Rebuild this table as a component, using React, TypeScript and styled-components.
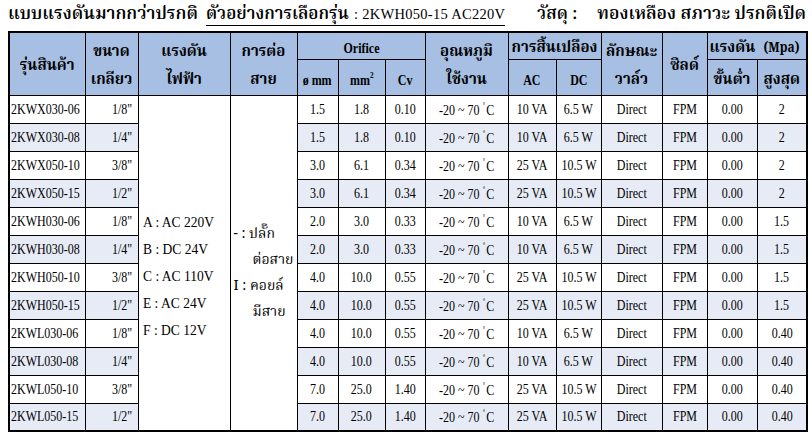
import React from "react";
import styled, { createGlobalStyle } from "styled-components";

const GlobalStyle = createGlobalStyle`
  html, body { margin: 0; padding: 0; background: #ffffff; }
  body { font-family: "Liberation Serif", serif; color: #000; }
  #root { width: 812px; height: 436px; overflow: hidden; }
`;

const THAI = `"Noto Serif Thai", "Noto Sans Thai", "Liberation Serif", serif`;
const SERIF = `"Liberation Serif", "Noto Serif Thai", serif`;

const Page = styled.div`
  width: 812px;
  height: 436px;
  box-sizing: border-box;
  padding: 0 6px 0 8px;
  display: flex;
  flex-direction: column;
`;

const TitleBar = styled.div`
  height: 31px;
  display: flex;
  align-items: center;
  justify-content: space-between;
  white-space: nowrap;
  padding-bottom: 3px;
  box-sizing: border-box;
`;

const TitleLeft = styled.div`
  display: flex;
  align-items: baseline;
  gap: 8px;
  padding-left: 0;
`;

const ThaiTitle = styled.span<{ $size?: number }>`
  font-family: ${THAI};
  font-size: ${(p) => p.$size ?? 17}px;
  font-weight: 600;
`;

const Underlined = styled.span`
  display: inline-flex;
  align-items: baseline;
  gap: 5px;
  border-bottom: 1.5px solid #000;
  line-height: 1.15;
`;

const ModelCode = styled.span`
  font-family: "Liberation Serif", serif;
  font-size: 14.5px;
  letter-spacing: 0.3px;
`;

const TitleRight = styled.div`
  display: flex;
  align-items: baseline;
  gap: 20px;
`;

const Table = styled.table`
  border-collapse: collapse;
  table-layout: fixed;
  width: 798px;
  border: 2px solid #000;
`;

const HeadRow = styled.tr<{ $h: number }>`
  height: ${(p) => p.$h}px;
`;

const HeadCell = styled.th<{ $thai?: boolean }>`
  background: #a7bfe2;
  border: 1px solid #000;
  padding: 6px 0 0 0;
  text-align: center;
  vertical-align: middle;
  font-family: ${(p) => (p.$thai ? THAI : SERIF)};
  font-size: 15px;
  font-weight: bold;
  line-height: 1;
  white-space: nowrap;
`;

const TwoLine = styled.div`
  display: grid;
  grid-template-rows: 27px 28px;
  align-items: center;
  justify-items: center;
`;

const Narrow = styled.span<{ $sx?: number; $origin?: string }>`
  display: inline-block;
  white-space: nowrap;
  transform: scaleX(${(p) => p.$sx ?? 0.8});
  transform-origin: ${(p) => p.$origin ?? "center"};
`;

const DataRow = styled.tr`
  height: 28px;
`;

const Cell = styled.td<{ $shade: boolean; $align?: "left" | "center"; $pl?: number }>`
  border: 1px solid #000;
  padding: 0 0 0 ${(p) => p.$pl ?? 0}px;
  background: ${(p) => (p.$shade ? "#e6ebf6" : "#ffffff")};
  text-align: ${(p) => p.$align ?? "center"};
  vertical-align: middle;
  font-family: ${SERIF};
  font-size: 15px;
  white-space: nowrap;
  line-height: 1;
  overflow: visible;
`;

const MergedCell = styled.td<{ $top: number }>`
  border: 1px solid #000;
  background: #ffffff;
  vertical-align: middle;
  padding: ${(p) => p.$top}px 0 0 0;
`;

const LineList = styled.div<{ $gap: number }>`
  display: flex;
  flex-direction: column;
  gap: ${(p) => p.$gap}px;
  line-height: 1;
`;

const VoltLine = styled.div`
  padding-left: 4px;
  font-family: ${SERIF};
  font-size: 15px;
  white-space: nowrap;
`;

const ConnLine = styled.div<{ $indent?: boolean }>`
  padding-left: ${(p) => (p.$indent ? 22 : 3)}px;
  font-family: ${THAI};
  font-size: 14px;
  white-space: nowrap;
`;

const Deg = styled.span`
  font-size: 11px;
  vertical-align: 5px;
  margin-right: 1px;
`;

const Sup = styled.sup`
  font-size: 9px;
  vertical-align: 7px;
  line-height: 0;
`;

type Row = {
  model: string;
  size: string;
  dia: string;
  area: string;
  cv: string;
  ac: string;
  dc: string;
  max: string;
};

const rows: Row[] = [
  { model: "2KWX030-06", size: '1/8"', dia: "1.5", area: "1.8", cv: "0.10", ac: "10 VA", dc: "6.5 W", max: "2" },
  { model: "2KWX030-08", size: '1/4"', dia: "1.5", area: "1.8", cv: "0.10", ac: "10 VA", dc: "6.5 W", max: "2" },
  { model: "2KWX050-10", size: '3/8"', dia: "3.0", area: "6.1", cv: "0.34", ac: "25 VA", dc: "10.5 W", max: "2" },
  { model: "2KWX050-15", size: '1/2"', dia: "3.0", area: "6.1", cv: "0.34", ac: "25 VA", dc: "10.5 W", max: "2" },
  { model: "2KWH030-06", size: '1/8"', dia: "2.0", area: "3.0", cv: "0.33", ac: "10 VA", dc: "6.5 W", max: "1.5" },
  { model: "2KWH030-08", size: '1/4"', dia: "2.0", area: "3.0", cv: "0.33", ac: "10 VA", dc: "6.5 W", max: "1.5" },
  { model: "2KWH050-10", size: '3/8"', dia: "4.0", area: "10.0", cv: "0.55", ac: "25 VA", dc: "10.5 W", max: "1.5" },
  { model: "2KWH050-15", size: '1/2"', dia: "4.0", area: "10.0", cv: "0.55", ac: "25 VA", dc: "10.5 W", max: "1.5" },
  { model: "2KWL030-06", size: '1/8"', dia: "4.0", area: "10.0", cv: "0.55", ac: "10 VA", dc: "6.5 W", max: "0.40" },
  { model: "2KWL030-08", size: '1/4"', dia: "4.0", area: "10.0", cv: "0.55", ac: "10 VA", dc: "6.5 W", max: "0.40" },
  { model: "2KWL050-10", size: '3/8"', dia: "7.0", area: "25.0", cv: "1.40", ac: "25 VA", dc: "10.5 W", max: "0.40" },
  { model: "2KWL050-15", size: '1/2"', dia: "7.0", area: "25.0", cv: "1.40", ac: "25 VA", dc: "10.5 W", max: "0.40" },
];

const colWidths = [76, 53, 92, 67, 41, 47, 40, 83, 48, 45, 61, 45, 50, 50];

const voltages = ["A : AC 220V", "B : DC 24V", "C : AC 110V", "E : AC 24V", "F : DC 12V"];

const N = ({ children }: { children: React.ReactNode }) => <Narrow>{children}</Narrow>;

export default function App() {
  return (
    <>
      <GlobalStyle />
      <Page>
        <TitleBar>
          <TitleLeft>
            <ThaiTitle $size={17.5}>แบบแรงดันมากกว่าปรกติ</ThaiTitle>
            <Underlined>
              <ThaiTitle $size={17}>ตัวอย่างการเลือกรุ่น</ThaiTitle>
              <ModelCode>: 2KWH050-15 AC220V</ModelCode>
            </Underlined>
          </TitleLeft>
          <TitleRight>
            <ThaiTitle $size={17}>วัสดุ :</ThaiTitle>
            <ThaiTitle $size={17.5}>ทองเหลือง สภาวะ ปรกติเปิด</ThaiTitle>
          </TitleRight>
        </TitleBar>
        <Table>
          <colgroup>
            {colWidths.map((w, i) => (
              <col key={i} style={{ width: w }} />
            ))}
          </colgroup>
          <thead>
            <HeadRow $h={27}>
              <HeadCell $thai rowSpan={2}>รุ่นสินค้า</HeadCell>
              <HeadCell $thai rowSpan={2}>
                <TwoLine><span>ขนาด</span><span>เกลียว</span></TwoLine>
              </HeadCell>
              <HeadCell $thai rowSpan={2}>
                <TwoLine><span>แรงดัน</span><span>ไฟฟ้า</span></TwoLine>
              </HeadCell>
              <HeadCell $thai rowSpan={2}>
                <TwoLine><span>การต่อ</span><span>สาย</span></TwoLine>
              </HeadCell>
              <HeadCell colSpan={3}><N>Orifice</N></HeadCell>
              <HeadCell $thai rowSpan={2}>
                <TwoLine><span>อุณหภูมิ</span><span>ใช้งาน</span></TwoLine>
              </HeadCell>
              <HeadCell $thai colSpan={2}>การสิ้นเปลือง</HeadCell>
              <HeadCell $thai rowSpan={2}>
                <TwoLine><span>ลักษณะ</span><span>วาล์ว</span></TwoLine>
              </HeadCell>
              <HeadCell $thai rowSpan={2}>ซิลด์</HeadCell>
              <HeadCell $thai colSpan={2}>แรงดัน <N>(Mpa)</N></HeadCell>
            </HeadRow>
            <HeadRow $h={36}>
              <HeadCell><N>ø mm</N></HeadCell>
              <HeadCell><N>mm<Sup>2</Sup></N></HeadCell>
              <HeadCell><N>Cv</N></HeadCell>
              <HeadCell><N>AC</N></HeadCell>
              <HeadCell><N>DC</N></HeadCell>
              <HeadCell $thai>ขั้นต่ำ</HeadCell>
              <HeadCell $thai>สูงสุด</HeadCell>
            </HeadRow>
          </thead>
          <tbody>
            {rows.map((r, i) => {
              const shade = i % 2 === 1;
              return (
                <DataRow key={r.model}>
                  <Cell $shade={shade} $align="left" $pl={1}>
                    <Narrow $origin="left">{r.model}</Narrow>
                  </Cell>
                  <Cell $shade={shade} $align="left" $pl={26}>
                    <Narrow $origin="left">{r.size}</Narrow>
                  </Cell>
                  {i === 0 && (
                    <>
                      <MergedCell rowSpan={12} $top={28}>
                        <LineList $gap={12}>
                          {voltages.map((v) => (
                            <VoltLine key={v}>
                              <Narrow $origin="left" $sx={0.9}>{v}</Narrow>
                            </VoltLine>
                          ))}
                        </LineList>
                      </MergedCell>
                      <MergedCell rowSpan={12} $top={20}>
                        <LineList $gap={12}>
                          <ConnLine>- : ปลั๊ก</ConnLine>
                          <ConnLine $indent>ต่อสาย</ConnLine>
                          <ConnLine>I : คอยล์</ConnLine>
                          <ConnLine $indent>มีสาย</ConnLine>
                        </LineList>
                      </MergedCell>
                    </>
                  )}
                  <Cell $shade={shade}><N>{r.dia}</N></Cell>
                  <Cell $shade={shade}><N>{r.area}</N></Cell>
                  <Cell $shade={shade}><N>{r.cv}</N></Cell>
                  <Cell $shade={shade}><N>-20 ~ 70 <Deg>˚</Deg>C</N></Cell>
                  <Cell $shade={shade}><N>{r.ac}</N></Cell>
                  <Cell $shade={shade}><N>{r.dc}</N></Cell>
                  <Cell $shade={shade}><N>Direct</N></Cell>
                  <Cell $shade={shade}><N>FPM</N></Cell>
                  <Cell $shade={shade}><N>0.00</N></Cell>
                  <Cell $shade={shade}><N>{r.max}</N></Cell>
                </DataRow>
              );
            })}
          </tbody>
        </Table>
      </Page>
    </>
  );
}
